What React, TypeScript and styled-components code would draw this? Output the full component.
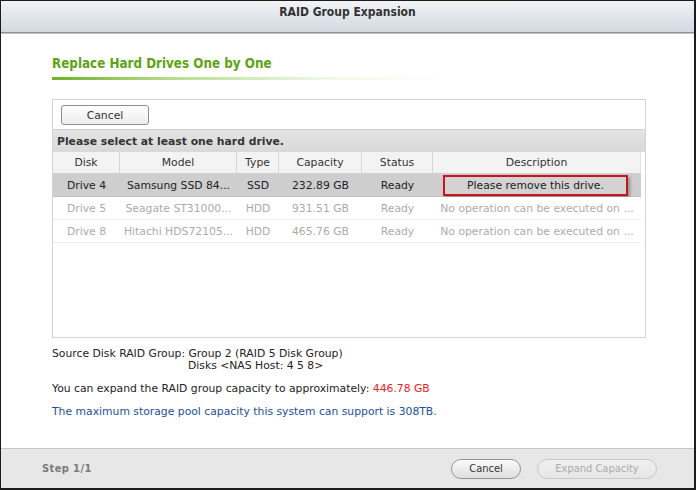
import React from "react";
import styled, { createGlobalStyle } from "styled-components";

const Global = createGlobalStyle`
  html, body { margin: 0; padding: 0; background: #fff; }
  body { font-family: "DejaVu Sans", Verdana, sans-serif; font-size: 10.8px; color: #222; }
  * { box-sizing: border-box; }
`;

const Window = styled.div`
  width: 696px;
  height: 490px;
  border-top: 1px solid #1c1c1c;
  border-left: 1px solid #1c1c1c;
  border-right: 2px solid #1c1c1c;
  border-bottom: 2px solid #1c1c1c;
  display: flex;
  flex-direction: column;
  background: #fff;
  overflow: hidden;
`;

const TitleBar = styled.div`
  height: 32px;
  flex: none;
  background: linear-gradient(#f1f3f6, #d4d9e0);
  border-bottom: 1px solid #8d9197;
  box-shadow: 0 1px 0 #c3c6ca;
  display: flex;
  align-items: center;
  justify-content: center;
  padding-bottom: 10px;
  font-family: "DejaVu Sans Condensed", "DejaVu Sans", sans-serif;
  font-weight: bold;
  font-size: 12px;
  color: #333;
`;

const Body = styled.div`
  flex: 1;
  padding: 23px 0 0 51px;
  display: flex;
  flex-direction: column;
`;

const Heading = styled.div`
  font-family: "DejaVu Sans Condensed", "DejaVu Sans", sans-serif;
  font-weight: bold;
  font-size: 13.3px;
  color: #5ca512;
  line-height: 16px;
`;

const HeadingRule = styled.div`
  margin-top: 5px;
  width: 395px;
  height: 3px;
  background: linear-gradient(to right, #6db322 0%, #b7dc8e 30%, rgba(230, 244, 215, 0.6) 70%, rgba(255, 255, 255, 0) 100%);
`;

const Panel = styled.div`
  margin-top: 19px;
  width: 594px;
  height: 239px;
  border: 1px solid #d2d2d2;
  display: flex;
  flex-direction: column;
`;

const Toolbar = styled.div`
  height: 29px;
  padding: 5px 0 0 8px;
  flex: none;
`;

const SmallButton = styled.button`
  width: 88px;
  height: 20px;
  border: 1px solid #8e8e8e;
  border-radius: 3px;
  background: linear-gradient(#ffffff, #ececec);
  font-family: "DejaVu Sans", sans-serif;
  font-size: 10.8px;
  color: #333;
  padding: 0;
`;

const Band = styled.div`
  height: 23px;
  flex: none;
  border-top: 1px solid #cfcfcf;
  background: linear-gradient(#e4e4e4, #d9d9d9);
  display: flex;
  align-items: center;
  padding-left: 4px;
  font-weight: bold;
  color: #333;
`;

const Grid = styled.div`
  display: grid;
  grid-template-columns: 67px 117px 42px 83px 71px 208px;
  width: 588px;
`;

const HeadCell = styled.div<{ $last?: boolean }>`
  height: 22px;
  background: #f3f3f3;
  border-right: 1px solid ${(p) => (p.$last ? "#e2e2e2" : "#d6d6d6")};
  border-bottom: 1px solid #d0d0d0;
  display: flex;
  align-items: center;
  justify-content: center;
  color: #333;
`;

const Cell = styled.div<{ $sel?: boolean; $dim?: boolean; $start?: boolean }>`
  height: 23px;
  display: flex;
  align-items: center;
  justify-content: ${(p) => (p.$start ? "flex-start" : "center")};
  background: ${(p) => (p.$sel ? "#cecece" : "#fff")};
  border-bottom: 1px solid ${(p) => (p.$sel ? "#c2c2c2" : "#efefef")};
  color: ${(p) => (p.$dim ? "#ababab" : "#222")};
  white-space: nowrap;
  padding: 0 2px;
`;

const Flag = styled.div`
  width: 185px;
  height: 21px;
  border: 2px solid #c8151b;
  background: #d3d3d3;
  box-shadow: 2px 2px 3px rgba(0, 0, 0, 0.3);
  display: flex;
  align-items: center;
  justify-content: center;
  color: #222;
  margin-left: 8px;
`;

const Info = styled.div`
  margin-top: 10px;
  display: flex;
  flex-direction: column;
  color: #222;
  line-height: 12px;
`;

const Indent = styled.div`
  padding-left: 136px;
`;

const Para = styled.div<{ $blue?: boolean }>`
  margin-top: 11px;
  line-height: 12px;
  color: ${(p) => (p.$blue ? "#1d4f9c" : "#222")};
`;

const Red = styled.span`
  color: #f21d1d;
`;

const Footer = styled.div`
  height: 40px;
  flex: none;
  border-top: 1px solid #c6c6c6;
  background: #e7e7e7;
  display: flex;
  align-items: center;
  padding: 0 37px 0 41px;
`;

const Step = styled.div`
  font-family: "DejaVu Sans Condensed", "DejaVu Sans", sans-serif;
  font-weight: bold;
  font-size: 11px;
  color: #7a7a7a;
  flex: 1;
  letter-spacing: 0.4px;
`;

const PillButton = styled.button<{ $w: number; $disabled?: boolean }>`
  width: ${(p) => p.$w}px;
  height: 20px;
  margin-left: 16px;
  border-radius: 10px;
  border: 1px solid ${(p) => (p.$disabled ? "#c9c9c9" : "#959595")};
  background: ${(p) => (p.$disabled ? "linear-gradient(#f0f0f0, #e6e6e6)" : "linear-gradient(#fbfbfb, #dedede)")};
  font-family: "DejaVu Sans Condensed", "DejaVu Sans", sans-serif;
  font-size: 11px;
  color: ${(p) => (p.$disabled ? "#ababab" : "#333")};
  padding: 0;
`;

const headers = ["Disk", "Model", "Type", "Capacity", "Status", "Description"];

const rows = [
  { disk: "Drive 4", model: "Samsung SSD 84...", type: "SSD", cap: "232.89 GB", status: "Ready", sel: true },
  { disk: "Drive 5", model: "Seagate ST31000...", type: "HDD", cap: "931.51 GB", status: "Ready", sel: false },
  { disk: "Drive 8", model: "Hitachi HDS72105...", type: "HDD", cap: "465.76 GB", status: "Ready", sel: false },
];

export default function App() {
  return (
    <>
      <Global />
      <Window>
        <TitleBar>RAID Group Expansion</TitleBar>
        <Body>
          <Heading>Replace Hard Drives One by One</Heading>
          <HeadingRule />
          <Panel>
            <Toolbar>
              <SmallButton>Cancel</SmallButton>
            </Toolbar>
            <Band>Please select at least one hard drive.</Band>
            <Grid>
              {headers.map((h, i) => (
                <HeadCell key={h} $last={i === headers.length - 1}>
                  {h}
                </HeadCell>
              ))}
              {rows.map((r) => (
                <React.Fragment key={r.disk}>
                  <Cell $sel={r.sel} $dim={!r.sel}>{r.disk}</Cell>
                  <Cell $sel={r.sel} $dim={!r.sel}>{r.model}</Cell>
                  <Cell $sel={r.sel} $dim={!r.sel}>{r.type}</Cell>
                  <Cell $sel={r.sel} $dim={!r.sel}>{r.cap}</Cell>
                  <Cell $sel={r.sel} $dim={!r.sel}>{r.status}</Cell>
                  <Cell $sel={r.sel} $dim={!r.sel} $start={r.sel}>
                    {r.sel ? <Flag>Please remove this drive.</Flag> : "No operation can be executed on ..."}
                  </Cell>
                </React.Fragment>
              ))}
            </Grid>
          </Panel>
          <Info>
            <div>Source Disk RAID Group: Group 2 (RAID 5 Disk Group)</div>
            <Indent>Disks &lt;NAS Host: 4 5 8&gt;</Indent>
            <Para>
              You can expand the RAID group capacity to approximately: <Red>446.78 GB</Red>
            </Para>
            <Para $blue>The maximum storage pool capacity this system can support is 308TB.</Para>
          </Info>
        </Body>
        <Footer>
          <Step>Step 1/1</Step>
          <PillButton $w={70}>Cancel</PillButton>
          <PillButton $w={120} $disabled>
            Expand Capacity
          </PillButton>
        </Footer>
      </Window>
    </>
  );
}
